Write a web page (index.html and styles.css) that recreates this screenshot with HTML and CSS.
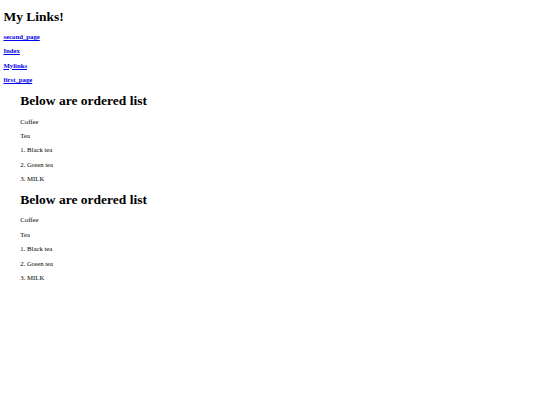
FILE: index.html
```html
<!DOCTYPE html>
<html>
<head>
<meta charset="utf-8">
<title>My Links!</title>
<link rel="stylesheet" href="styles.css">
</head>
<body>
<h1 class="title">My Links!</h1>
<p class="link"><a href="#"><b>second_page</b></a></p>
<p class="link"><a href="#"><b>Index</b></a></p>
<p class="link"><a href="#"><b>Mylinks</b></a></p>
<p class="link"><a href="#"><b>first_page</b></a></p>
<div class="list">
  <h2 class="list-title">Below are ordered list</h2>
  <p class="item">Coffee</p>
  <p class="item">Tea</p>
  <p class="item">1. Black tea</p>
  <p class="item">2. Green tea</p>
  <p class="item">3. MILK</p>
</div>
<div class="list">
  <h2 class="list-title">Below are ordered list</h2>
  <p class="item">Coffee</p>
  <p class="item">Tea</p>
  <p class="item">1. Black tea</p>
  <p class="item">2. Green tea</p>
  <p class="item">3. MILK</p>
</div>
</body>
</html>
```
FILE: styles.css
```css
html {
  background: #fff;
}
body {
  margin: 3.4px;
  font-family: "Liberation Serif", "Times New Roman", serif;
  font-size: 6.75px;
  color: #000;
}
.title {
  font-size: 13.5px;
  line-height: 1.15;
  margin: 5.2px 0 9px;
}
.link {
  margin: 6.65px 0;
  line-height: 1.15;
}
.link a {
  color: #0000ee;
}
.list {
  padding-left: 16.9px;
}
.list-title {
  font-size: 13.5px;
  line-height: 1.15;
  margin: 9px 0;
}
.item {
  margin: 6.68px 0;
  line-height: 1.15;
}
```
